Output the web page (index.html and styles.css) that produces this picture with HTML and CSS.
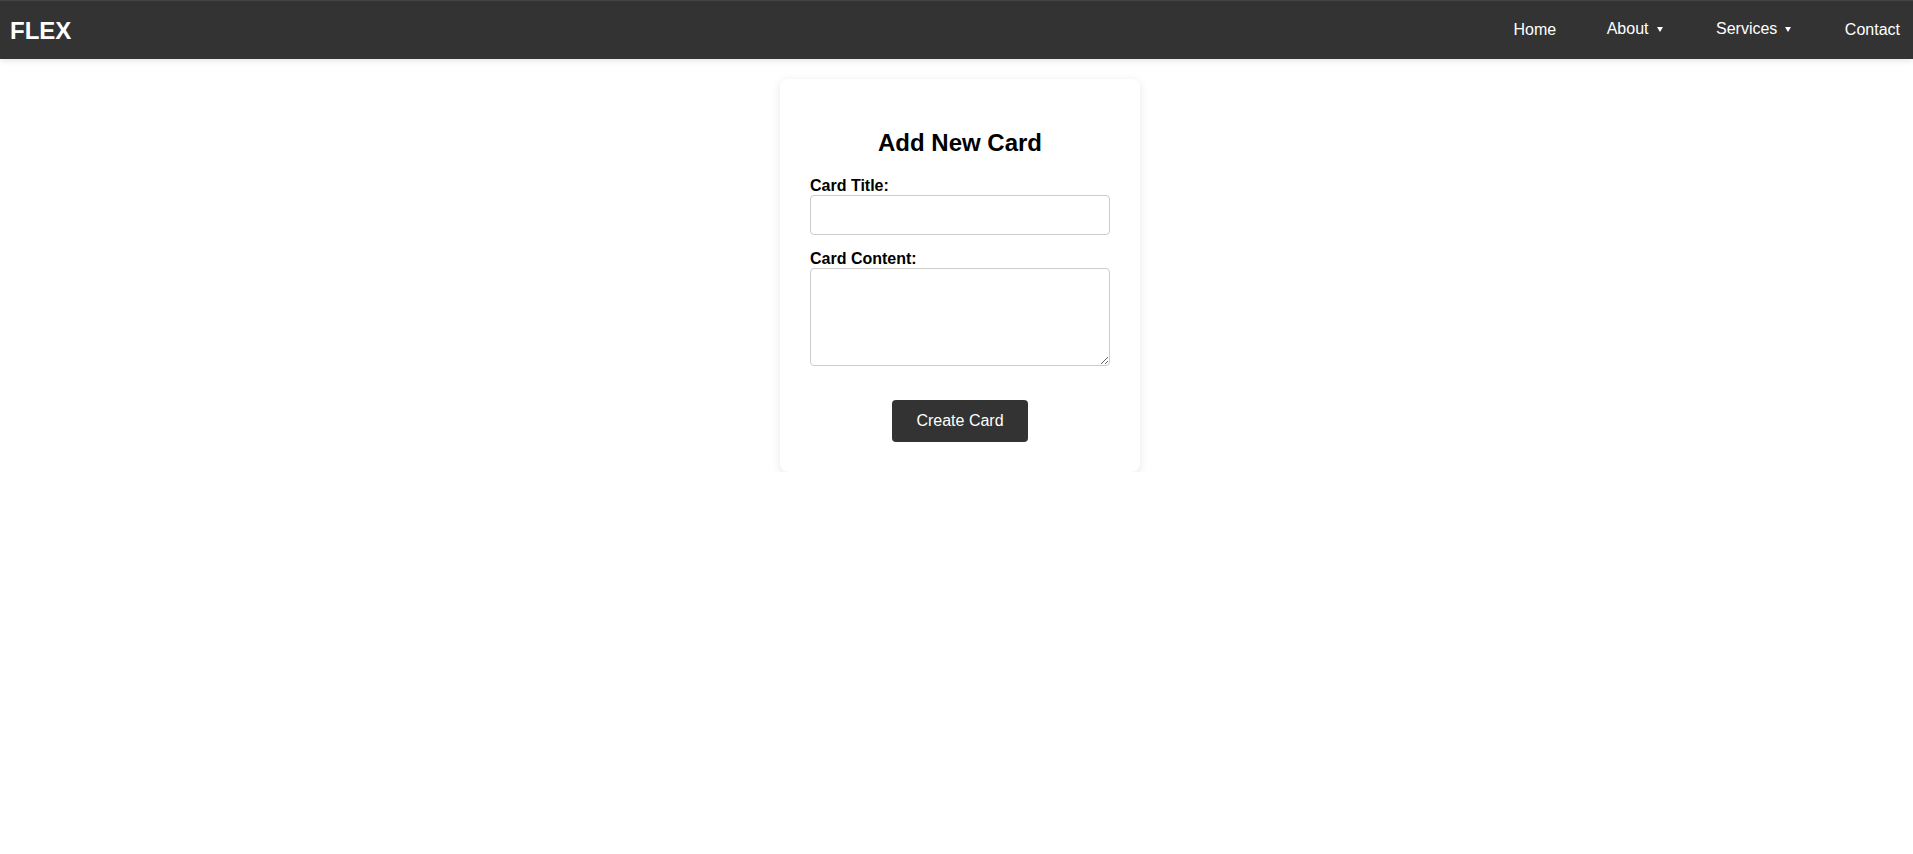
FILE: index.html
```html
<!DOCTYPE html>
<html lang="en">
<head>
    <meta charset="UTF-8">
    <meta name="viewport" content="width=device-width, initial-scale=1.0">
    <title>Flex Cards</title>
    <link rel="stylesheet" href="styles.css">
</head>
<body>

    <nav class="navbar">
        <div class="logo">FLEX</div>
        <ul class="nav-links">
            <li><a href="#">Home</a></li>
            <li class="dropdown"><a href="#">About<span class="caret"></span></a></li>
            <li class="dropdown"><a href="#">Services<span class="caret"></span></a></li>
            <li><a href="#">Contact</a></li>
        </ul>
    </nav>

    <main class="container">
        <div class="card-form">
            <h2>Add New Card</h2>
            <form id="cardForm">
                <div class="form-group">
                    <label for="title">Card Title:</label>
                    <input type="text" id="title" required>
                </div>
                <div class="form-group">
                    <label for="content">Card Content:</label>
                    <textarea id="content" required></textarea>
                </div>
                <div class="actions">
                    <button type="submit">Create Card</button>
                </div>
            </form>
        </div>
    </main>

</body>
</html>
```

FILE: styles.css
```css
* {
    box-sizing: border-box;
}
body {
    margin: 0;
    font-family: "Liberation Sans", Arial, sans-serif;
    background-color: #fff;
    color: #000;
}
.navbar {
    display: flex;
    align-items: center;
    justify-content: space-between;
    height: 59px;
    padding: 0 13px 0 10px;
    background-color: #333;
    border-top: 1px solid #444;
    box-shadow: 0 2px 6px rgba(0, 0, 0, 0.1);
}
.logo {
    color: #fff;
    font-size: 24px;
    font-weight: bold;
    padding-top: 2px;
}
.nav-links {
    display: flex;
    align-items: center;
    gap: 50.5px;
    list-style: none;
    margin: 0;
    padding: 0;
}
.nav-links a {
    display: flex;
    align-items: center;
    color: #fff;
    text-decoration: none;
    font-size: 16px;
}
.dropdown {
    padding-bottom: 3px;
}
.caret {
    display: inline-block;
    width: 0;
    height: 0;
    margin: 1px 3px 0 8px;
    border-left: 3px solid transparent;
    border-right: 3px solid transparent;
    border-top: 5px solid #fff;
}
.container {
    display: flex;
    justify-content: center;
    padding: 20px 0 0 7px;
}
.card-form {
    width: 360px;
    padding: 30px;
    background-color: #fff;
    border-radius: 8px;
    box-shadow: 0 2px 10px rgba(0, 0, 0, 0.1);
}
.card-form h2 {
    text-align: center;
    font-size: 24px;
    margin: 20px 0;
}
.form-group {
    margin-bottom: 15px;
}
.form-group label {
    display: block;
    font-weight: bold;
    font-size: 16px;
}
.form-group input,
.form-group textarea {
    display: block;
    width: 100%;
    padding: 10px;
    border: 1px solid #ccc;
    border-radius: 4px;
    font-family: "Liberation Sans", Arial, sans-serif;
    font-size: 16px;
}
.form-group input {
    height: 40px;
}
.form-group textarea {
    height: 98px;
    resize: vertical;
}
.actions {
    text-align: center;
    margin-top: 34px;
}
button {
    padding: 12px 24px;
    background-color: #333;
    color: #fff;
    border: none;
    border-radius: 4px;
    font-family: "Liberation Sans", Arial, sans-serif;
    font-size: 16px;
    cursor: pointer;
}
button:hover {
    background-color: #222;
}
```
